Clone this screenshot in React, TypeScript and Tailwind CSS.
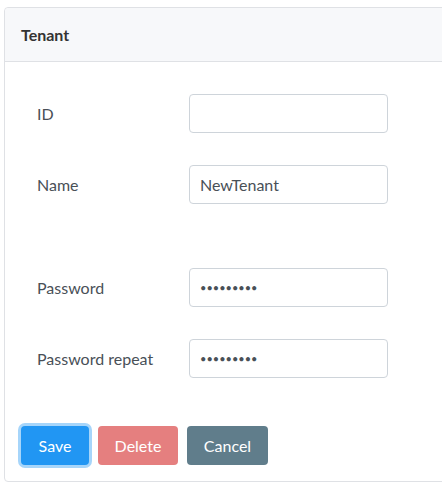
import React from 'react'

const font = { fontFamily: 'Lato, "Open Sans", sans-serif' }

function Row({ label, children }: { label: string; children: React.ReactNode }) {
  return (
    <div className="flex items-center">
      <label className="w-[152px] text-[16px] text-[#495057]">{label}</label>
      {children}
    </div>
  )
}

function Field({ value, type = 'text' }: { value: string; type?: string }) {
  const size = type === 'password' ? 'text-[11px]' : 'text-[16px]'
  return (
    <input
      type={type}
      defaultValue={value}
      className={`w-[199px] h-[39px] rounded-[4px] border border-[#ced4da] bg-white px-[10px] text-[#495057] outline-none ${size}`}
    />
  )
}

export default function App() {
  return (
    <div className="w-[442px] h-[499px] overflow-hidden bg-white pt-[7px] pl-[4px] antialiased" style={font}>
      <div className="w-[470px] rounded-[4px] border border-[#dfe1e5] bg-white">
        <div className="h-[54px] flex items-center px-4 bg-[#f7f8fa] border-b border-[#dfe1e5] rounded-t-[4px]">
          <h3 className="text-[16px] font-bold text-[#333]">Tenant</h3>
        </div>

        <div className="pt-[32px] pl-[32px] flex flex-col gap-[32px]">
          <Row label="ID"><Field value="" /></Row>
          <Row label="Name"><Field value="NewTenant" /></Row>
          <div className="mt-[32px]">
            <Row label="Password"><Field value="123456789" type="password" /></Row>
          </div>
          <Row label="Password repeat"><Field value="123456789" type="password" /></Row>
        </div>

        <div className="flex gap-[9px] px-4 pt-[48px] pb-4">
          <button className="w-[68px] h-[39px] rounded-[4px] bg-[#2196f3] text-white text-[16px] ring-3 ring-[#a6d5fa]">Save</button>
          <button className="w-[80px] h-[39px] rounded-[4px] bg-[#e57f7f] text-white text-[16px]">Delete</button>
          <button className="w-[81px] h-[39px] rounded-[4px] bg-[#607d8b] text-white text-[16px]">Cancel</button>
        </div>
      </div>
    </div>
  )
}
